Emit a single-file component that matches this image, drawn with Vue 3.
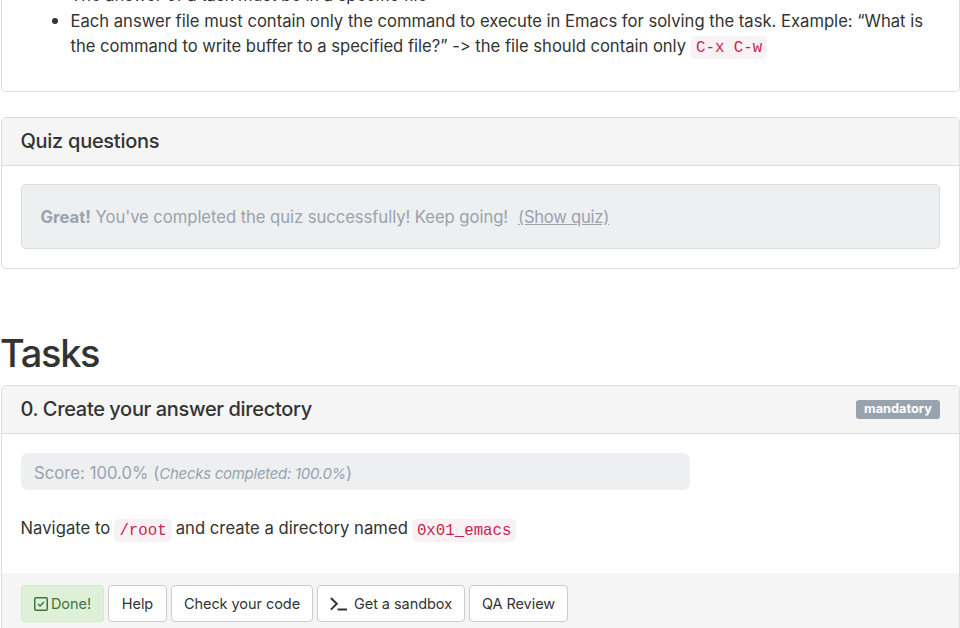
<script setup>
const tools = [
  { label: 'Help', cls: 'help' },
  { label: 'Check your code', cls: 'check' },
  { label: 'Get a sandbox', cls: 'sandbox', icon: true },
  { label: 'QA Review', cls: 'review' },
]
</script>

<template>
  <main class="page">
    <section class="panel intro">
      <ul class="rules">
        <li><span class="line first">The answer of a task must be in a specific file</span></li>
        <li>
          <span class="line">Each answer file must contain only the command to execute in Emacs for solving the task. Example: “What is</span>
          <span class="line"><span class="l2">the command to write buffer to a specified file?” -&gt; the file should contain only</span><code>C-x C-w</code></span>
        </li>
      </ul>
    </section>

    <section class="panel quiz">
      <header class="panel-head"><h3 class="quiz-title">Quiz questions</h3></header>
      <div class="quiz-body">
        <div class="alert">
          <strong>Great!</strong><span class="msg">You've completed the quiz successfully! Keep going!</span><a class="show">(Show quiz)</a>
        </div>
      </div>
    </section>

    <h2 class="heading">Tasks</h2>

    <section class="panel task">
      <header class="panel-head">
        <h3 class="task-title">0. Create your answer directory</h3>
        <span class="label"><span>mandatory</span></span>
      </header>
      <div class="task-body">
        <div class="score"><span class="points">Score: 100.0% (</span><em>Checks completed: 100.0%</em><span>)</span></div>
        <p class="text"><span>Navigate to</span><code>/root</code><span>and create a directory named</span><code>0x01_emacs</code></p>
      </div>
      <footer class="task-foot">
        <button class="btn done">
          <svg width="14" height="14" viewBox="0 0 14 14" fill="none" stroke="currentColor"><rect x=".75" y=".75" width="12.5" height="12.5" rx="1.2" stroke-width="1.5" /><path d="M4 6.9 6.1 8.9l3.8-3.9" stroke-width="1.4" /></svg>
          <span>Done!</span>
        </button>
        <button v-for="t in tools" :key="t.label" class="btn" :class="t.cls">
          <svg v-if="t.icon" width="17" height="14" viewBox="0 0 17 14" fill="none" stroke="currentColor" stroke-width="2"><path d="M.9 1 6.8 6.8.9 12.6M7.5 12.5H17" /></svg>
          <span>{{ t.label }}</span>
        </button>
      </footer>
    </section>
  </main>
</template>

<style>
body { margin: 0; background: #fff; overflow: hidden; }
</style>

<style scoped>
* { box-sizing: border-box; }
.page {
  height: 628px;
  padding-left: 1px;
  overflow: hidden;
  display: flex;
  flex-direction: column;
  color: #333;
  font: 16.62px/25px Inter, "Liberation Sans", sans-serif;
  font-feature-settings: "calt" 0;
  white-space: nowrap;
}
.panel { flex: none; border: 1px solid #ddd; border-radius: 5px; background: #fff; }
.intro { height: 92px; border-top: 0; border-radius: 0 0 5px 5px; overflow: hidden; display: flex; align-items: flex-end; padding-bottom: 32px; }
.rules { margin: 0; padding: 0 0 0 68.5px; }
.rules li::marker { font-size: 19px; }
.line { display: flex; height: 25px; align-items: center; }
.first { letter-spacing: -0.06px; }
.l2 { letter-spacing: -0.02px; }
h2, h3, p { margin: 0; }
h3 { font-size: 20px; font-weight: 500; line-height: 24px; padding-bottom: 2px; }
.quiz-title { letter-spacing: -0.28px; }
.task-title { letter-spacing: -0.3px; word-spacing: -0.4px; }
code {
  display: inline-block;
  height: 23px;
  padding: 0 5px;
  border-radius: 5px;
  background: #f9f2f4;
  color: #c7254e;
  font: 15.75px/24px "Liberation Mono", monospace;
}
.line code { margin-left: 5px; position: relative; top: 1px; }
.quiz { height: 152px; margin-top: 25px; }
.panel-head {
  height: 48px;
  padding: 0 19px 0 18.5px;
  display: flex;
  align-items: center;
  justify-content: space-between;
  border-bottom: 1px solid #ddd;
  border-radius: 4px 4px 0 0;
  background: #f5f5f5;
}
.quiz-body { padding: 18px 19px; }
.alert {
  height: 65px;
  padding: 2px 18.5px 0;
  display: flex;
  align-items: center;
  border: 1px solid #d8dde0;
  border-radius: 5px;
  background: #eeeff1;
  color: #98a3ae;
}
.alert strong { letter-spacing: 0.05px; }
.msg { margin-left: 4.5px; letter-spacing: -0.04px; }
.show { margin-left: 10px; letter-spacing: -0.25px; text-decoration: underline; }
.heading { margin: 63px 0 0 -1px; height: 43px; font-size: 38px; line-height: 43px; font-weight: 500; letter-spacing: -1.3px; }
.task { margin-top: 10px; height: 260px; }
.label {
  height: 19px;
  width: 84px;
  border-radius: 3px;
  background: #98a3ae;
  color: #fff;
  font-size: 12.75px;
  font-weight: 700;
  line-height: 18px;
  text-align: center;
}
.task-body { height: 139px; padding: 19px; }
.score {
  width: 669px;
  height: 37px;
  padding: 4px 13px 0;
  display: flex;
  align-items: center;
  border-radius: 7px;
  background: #eeeff1;
  color: #98a3ae;
}
.points { letter-spacing: 0.06px; }
.score em { font-size: 15px; letter-spacing: -0.28px; }
.text { display: flex; align-items: center; height: 25px; margin-top: 26px; margin-left: -0.5px; letter-spacing: 0.05px; }
.text code { margin: 3px 4px 0; letter-spacing: 0; }
.task-foot { height: 80px; padding: 12px 19px; display: flex; align-items: flex-start; gap: 4px; background: #f5f5f5; }
.btn {
  height: 37px;
  padding: 0;
  display: flex;
  align-items: center;
  justify-content: center;
  border: 1px solid #ccc;
  border-radius: 4px;
  background: #fff;
  color: #333;
  font: 14.5px/20px Inter, sans-serif;
  letter-spacing: -0.05px;
}
.done { width: 83px; gap: 3px; border-color: #d0e9c6; background: #dff0d8; color: #3c763d; }
.help { width: 59px; }
.check { width: 142px; }
.sandbox { width: 148px; gap: 7px; }
.review { width: 99px; }
</style>
